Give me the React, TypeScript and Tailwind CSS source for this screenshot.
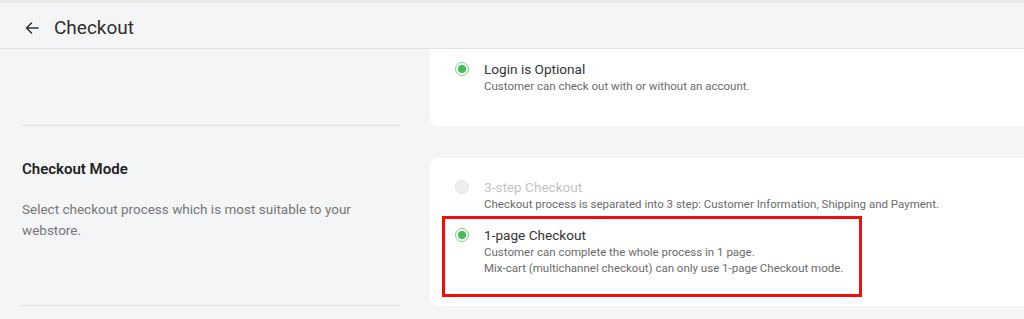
import { FC } from "react";

type OptionProps = {
  title: string;
  lines: string[];
  checked?: boolean;
  disabled?: boolean;
};

const Radio: FC<{ checked?: boolean; disabled?: boolean }> = ({ checked, disabled }) => {
  if (disabled) {
    return <span className="block w-[14px] h-[14px] rounded-full border border-[#e3e3e3] bg-[#efefef]" />;
  }
  return (
    <span className="flex items-center justify-center w-[14px] h-[14px] rounded-full border border-[#7fd08b] bg-white">
      {checked && <span className="block w-[8px] h-[8px] rounded-full bg-[#3fbf55]" />}
    </span>
  );
};

const Option: FC<OptionProps> = ({ title, lines, checked, disabled }) => (
  <div className="flex items-start">
    <div className="w-[30px] pl-[1px] pt-[1px]">
      <Radio checked={checked} disabled={disabled} />
    </div>
    <div>
      <p className={`text-[13.6px] leading-[17px] ${disabled ? "text-[#c4c4c4]" : "text-[#333]"}`}>{title}</p>
      {lines.map((l) => (
        <p key={l} className="text-[11.5px] leading-[16px] text-[#6b6b6b]">
          {l}
        </p>
      ))}
    </div>
  </div>
);

const App: FC = () => {
  return (
    <div className="w-[1024px] h-[319px] overflow-hidden bg-[#f4f5f7] font-['Roboto',sans-serif]">
      <div className="h-[3px] bg-[#e9eaec]" />
      <div className="h-[46px] flex items-center pt-[4px] bg-[#f4f5f7] border-b border-[#e2e3e6]">
        <svg className="ml-[25px] w-[14px] h-[14px]" viewBox="0 0 14 14" fill="none" stroke="#333" strokeWidth="1.6" strokeLinecap="round" strokeLinejoin="round">
          <path d="M13 7H1.5M6.5 2 1.5 7l5 5" />
        </svg>
        <h1 className="ml-[15px] text-[19px] text-[#2f2f2f] leading-none">Checkout</h1>
      </div>

      <div className="flex gap-[30px] pl-[22px]">
        <div className="w-[378px] h-[77px] border-b border-[#dcdde0]" />
        <div className="flex-1 mr-[-20px] h-[77px] bg-white rounded-b-lg pl-[24px] pt-[12px]">
          <Option title="Login is Optional" lines={["Customer can check out with or without an account."]} checked />
        </div>
      </div>

      <div className="flex gap-[30px] pl-[22px] mt-[32px]">
        <div className="w-[378px] h-[148px] border-b border-[#dcdde0] pt-[1px]">
          <h2 className="text-[15px] leading-[20px] font-semibold text-[#222]">Checkout Mode</h2>
          <p className="mt-[20px] text-[13.5px] leading-[21px] text-[#777] pr-[20px]">
            Select checkout process which is most suitable to your webstore.
          </p>
        </div>
        <div className="relative flex-1 mr-[-20px] h-[148px] bg-white rounded-lg pl-[24px] pt-[21px] flex flex-col gap-[15px]">
          <Option
            title="3-step Checkout"
            lines={["Checkout process is separated into 3 step: Customer Information, Shipping and Payment."]}
            disabled
          />
          <Option
            title="1-page Checkout"
            lines={[
              "Customer can complete the whole process in 1 page.",
              "Mix-cart (multichannel checkout) can only use 1-page Checkout mode.",
            ]}
            checked
          />
          <div className="absolute left-[12px] top-[58px] w-[420px] h-[81px] border-[3px] border-[#f20d0d]" />
        </div>
      </div>
    </div>
  );
};

export default App;
